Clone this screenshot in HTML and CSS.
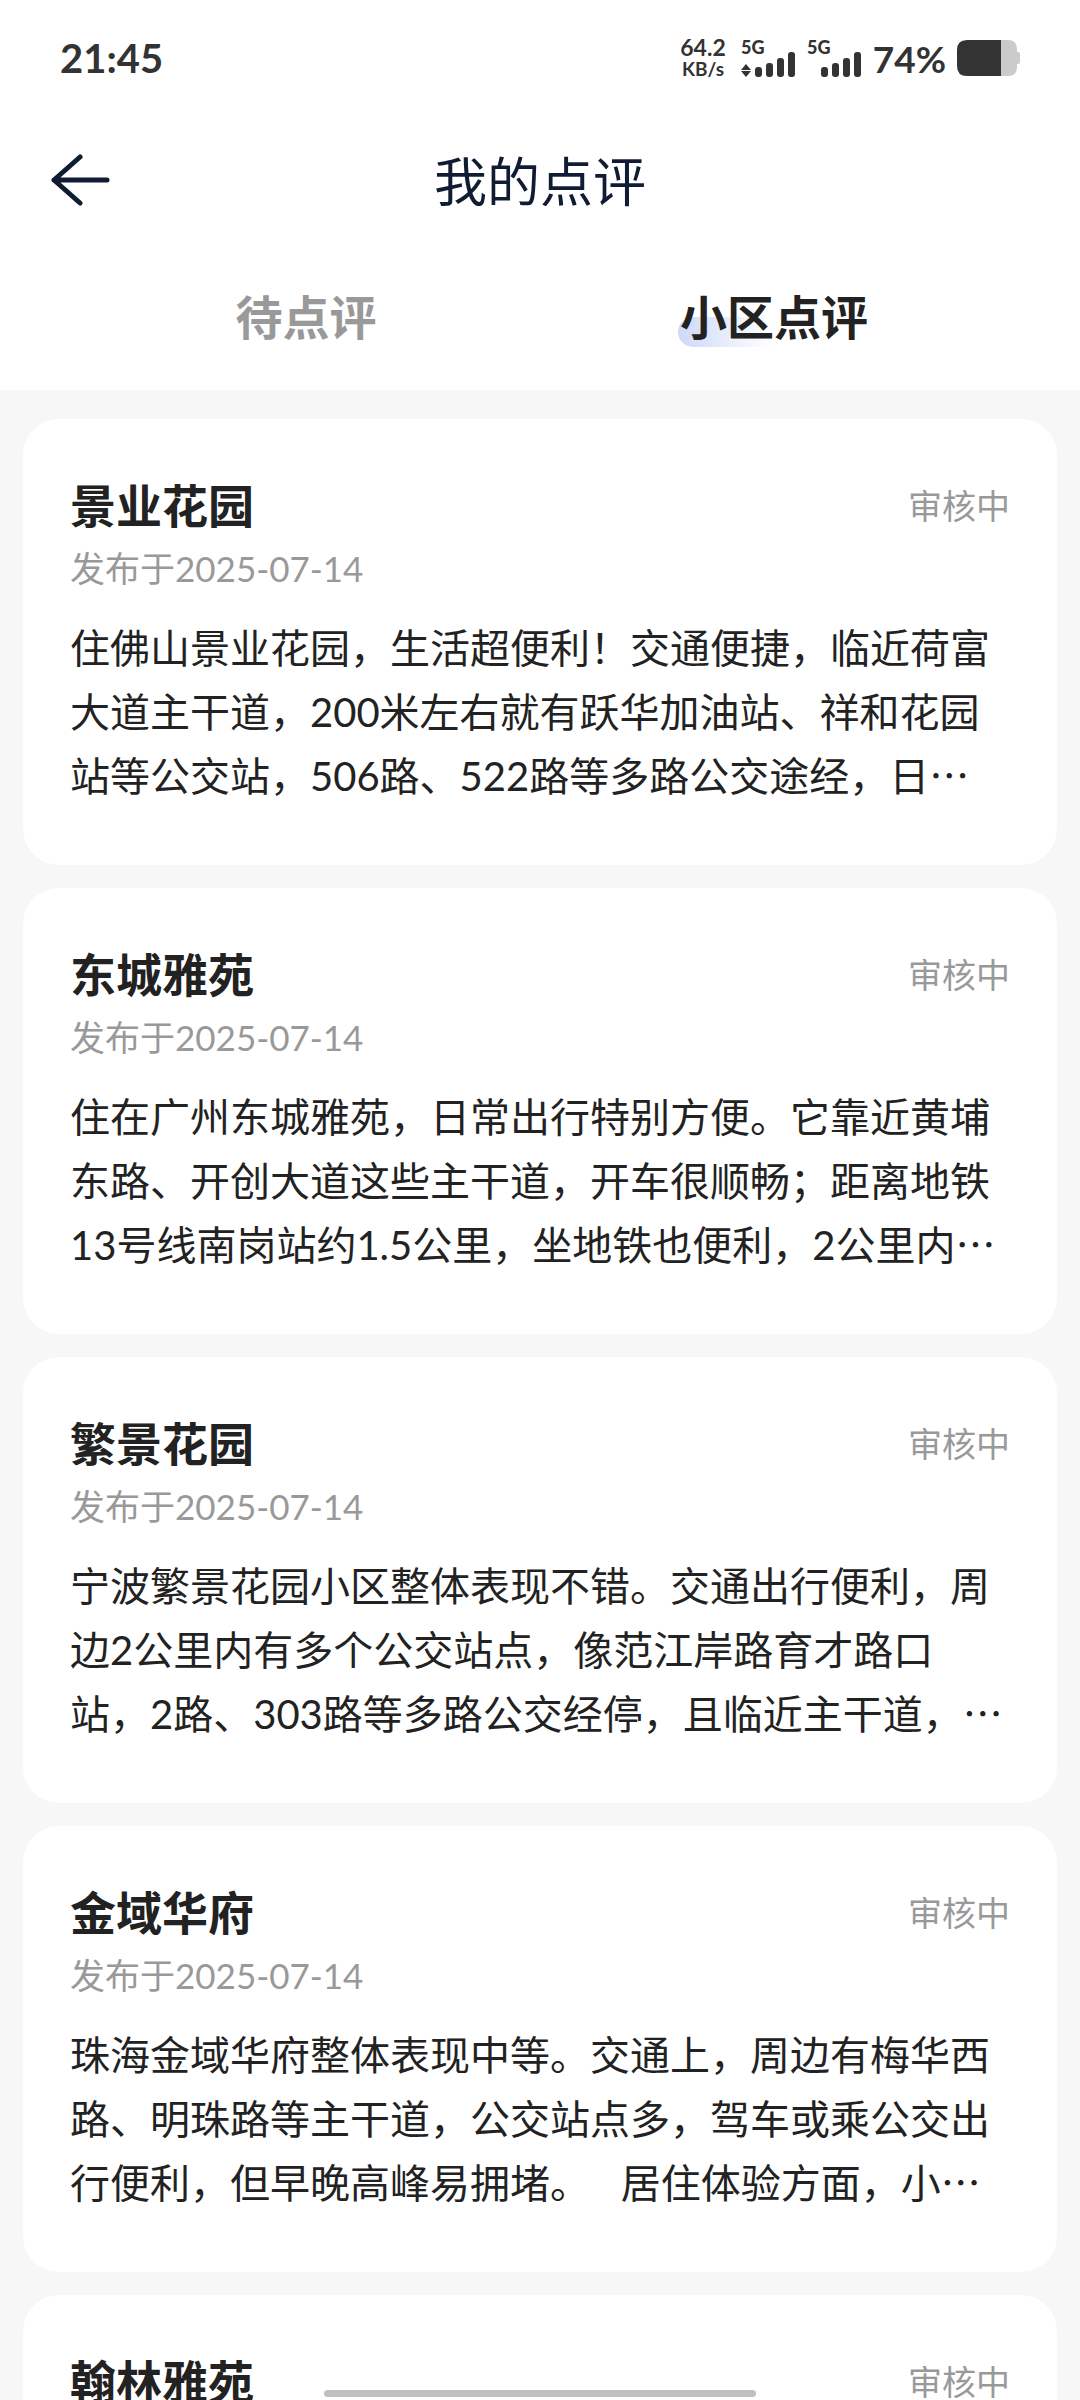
FILE: index.html
```html
<!DOCTYPE html>
<html lang="zh-CN">
<head>
  <meta charset="UTF-8">
  <meta name="viewport" content="width=device-width, initial-scale=1.0">
  <title>我的点评</title>
  <link rel="stylesheet" href="styles.css">
</head>
<body>

  <!-- Status bar -->
  <div class="status-bar">
    <span class="time">21:45</span>
    <div class="status-right">
      <div class="net-speed">
        <span class="speed-value">64.2</span>
        <span class="speed-unit">KB/s</span>
      </div>
      <svg class="signal" width="55" height="54" viewBox="0 -8 55 54">
        <text x="0" y="15">5G</text>
        <path d="M5 25l5 6H0zM5 38l5-6H0z"/>
        <rect x="14" y="28" width="7" height="10" rx="3"/>
        <rect x="25" y="24" width="7" height="14" rx="3"/>
        <rect x="36" y="19" width="7" height="19" rx="3"/>
        <rect x="47" y="13" width="7" height="25" rx="3"/>
      </svg>
      <svg class="signal" width="55" height="54" viewBox="0 -8 55 54">
        <text x="0" y="15">5G</text>
        <rect x="14" y="28" width="7" height="10" rx="3"/>
        <rect x="25" y="24" width="7" height="14" rx="3"/>
        <rect x="36" y="19" width="7" height="19" rx="3"/>
        <rect x="47" y="13" width="7" height="25" rx="3"/>
      </svg>
      <span class="battery-level">74%</span>
      <svg class="battery" width="63" height="36" viewBox="0 0 63 36">
        <path fill="#cbcbcb" d="M43 0h8q9 0 9 9v3h1q2 0 2 2v8q0 2-2 2h-1v3q0 9-9 9h-8z"/>
        <path fill="#333" d="M44 0H10Q0 0 0 10v16q0 10 10 10h34z"/>
      </svg>
    </div>
  </div>

  <!-- Title bar -->
  <header class="nav-bar">
    <button class="back-btn" type="button" aria-label="返回">
      <svg width="62" height="52" viewBox="0 0 62 52">
        <path d="M30 3L4 26l26 23M4 26h53" fill="none" stroke="#101c33" stroke-width="5" stroke-linecap="round" stroke-linejoin="round"/>
      </svg>
    </button>
    <h1 class="nav-title">我的点评</h1>
  </header>

  <nav class="tabs">
    <button class="tab" type="button"><span class="tab-text">待点评</span></button>
    <button class="tab active" type="button"><span class="tab-text">小区点评</span></button>
  </nav>

  <!-- Review list -->
  <main class="review-list">
    <article class="card">
      <div class="card-head">
        <h2 class="card-title">景业花园</h2>
        <span class="card-status">审核中</span>
      </div>
      <p class="card-date">发布于2025-07-14</p>
      <p class="card-text">住佛山景业花园，生活超便利！交通便捷，临近荷富大道主干道，200米左右就有跃华加油站、祥和花园站等公交站，506路、522路等多路公交途经，日⋯</p>
    </article>

    <article class="card">
      <div class="card-head">
        <h2 class="card-title">东城雅苑</h2>
        <span class="card-status">审核中</span>
      </div>
      <p class="card-date">发布于2025-07-14</p>
      <p class="card-text">住在广州东城雅苑，日常出行特别方便。它靠近黄埔东路、开创大道这些主干道，开车很顺畅；距离地铁13号线南岗站约1.5公里，坐地铁也便利，2公里内⋯</p>
    </article>

    <article class="card">
      <div class="card-head">
        <h2 class="card-title">繁景花园</h2>
        <span class="card-status">审核中</span>
      </div>
      <p class="card-date">发布于2025-07-14</p>
      <p class="card-text">宁波繁景花园小区整体表现不错。交通出行便利，周边2公里内有多个公交站点，像范江岸路育才路口站，2路、303路等多路公交经停，且临近主干道，⋯</p>
    </article>

    <article class="card">
      <div class="card-head">
        <h2 class="card-title">金域华府</h2>
        <span class="card-status">审核中</span>
      </div>
      <p class="card-date">发布于2025-07-14</p>
      <p class="card-text">珠海金域华府整体表现中等。交通上，周边有梅华西路、明珠路等主干道，公交站点多，驾车或乘公交出行便利，但早晚高峰易拥堵。&nbsp;&nbsp; 居住体验方面，小⋯</p>
    </article>

    <article class="card">
      <div class="card-head">
        <h2 class="card-title">翰林雅苑</h2>
        <span class="card-status">审核中</span>
      </div>
    </article>
  </main>

  <div class="home-indicator"></div>

</body>
</html>
```

FILE: styles.css
```css
* {
  box-sizing: border-box;
}

body {
  display: flex;
  flex-direction: column;
  height: 100vh;
  margin: 0;
  overflow: hidden;
  background-color: #fff;
  color: #222;
  font-family: Lato, "Noto Sans CJK SC", sans-serif;
}

h1, h2, p {
  margin: 0;
}

button {
  padding: 0;
  border: none;
  background: none;
  font-family: inherit;
  cursor: pointer;
}

svg {
  display: block;
}

/* Status bar */
.status-bar {
  display: flex;
  flex-shrink: 0;
  justify-content: space-between;
  align-items: center;
  height: 116px;
  padding: 0 60px;
  color: #333;
}

.time {
  font-size: 40px;
  font-weight: bold;
}

.status-right {
  display: flex;
  align-items: center;
  gap: 11px;
}

.net-speed {
  display: flex;
  flex-direction: column;
  align-items: center;
  margin-right: 4px;
  font-weight: bold;
  line-height: 22px;
}

.speed-value {
  font-size: 23px;
}

.speed-unit {
  font-size: 19px;
}

.signal {
  fill: #333;
  font-size: 18px;
  font-weight: 900;
}

.battery-level {
  font-size: 37px;
  font-weight: bold;
}

/* Title bar */
.nav-bar {
  position: relative;
  display: flex;
  flex-shrink: 0;
  justify-content: center;
  align-items: center;
  height: 128px;
}

.back-btn {
  position: absolute;
  left: 50px;
}

.nav-title {
  padding-bottom: 2px;
  color: #101c33;
  font-size: 53px;
  font-weight: normal;
}

/* Tabs */
.tabs {
  display: flex;
  flex-shrink: 0;
  height: 146px;
  padding: 0 72px 6px;
}

.tab {
  flex: 1;
  color: #999;
  font-size: 47px;
  font-weight: bold;
}

.tab.active {
  color: #222;
}

.tab-text {
  position: relative;
  z-index: 0;
}

/* Highlight behind the selected tab */
.tab.active .tab-text::before {
  content: "";
  position: absolute;
  z-index: -1;
  left: -2px;
  bottom: -2px;
  width: 50%;
  height: 30px;
  border-radius: 15px 0 0 15px;
  background: linear-gradient(to right, #cdd9f8, #fff);
}

/* Review list */
.review-list {
  display: flex;
  flex: 1;
  flex-direction: column;
  gap: 23px;
  min-height: 0;
  padding: 29px 23px 0;
  overflow: hidden;
  background-color: #f7f7f7;
}

.card {
  flex-shrink: 0;
  padding: 55px 47px 57px;
  border-radius: 36px;
  background-color: #fff;
}

.card-head {
  display: flex;
  justify-content: space-between;
  align-items: center;
  line-height: 64px;
}

.card-title {
  font-size: 46px;
  font-weight: bold;
}

.card-status {
  color: #999;
  font-size: 34px;
}

.card-date {
  color: #999;
  font-size: 35px;
  line-height: 60px;
}

.card-text {
  margin-top: 18px;
  font-size: 40px;
  line-height: 64px;
}

.home-indicator {
  position: fixed;
  bottom: 3px;
  left: 30%;
  width: 40%;
  height: 7px;
  border-radius: 4px;
  background-color: #c0c0c0;
}
```
